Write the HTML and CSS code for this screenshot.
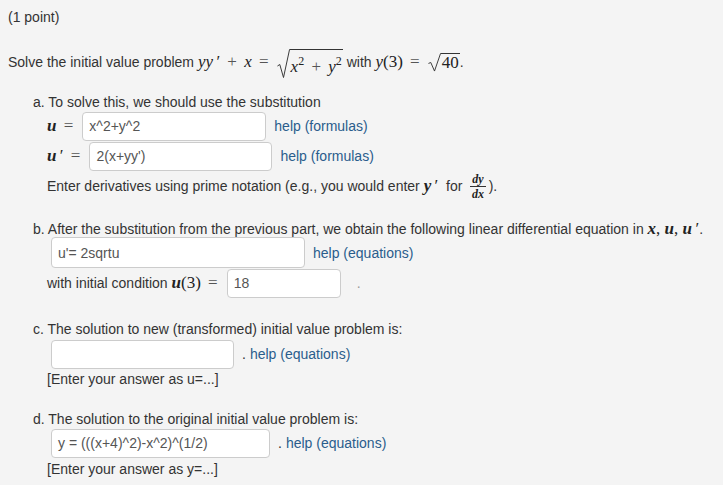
FILE: index.html
```html
<!DOCTYPE html>
<html>
<head>
<meta charset="utf-8">
<link rel="stylesheet" href="styles.css">
</head>
<body>
<div class="page">
  <p class="points">(1 point)</p>
  <p class="problem">Solve the initial value problem&nbsp;<span class="m"><i>yy</i>&thinsp;′ <span class="op">+</span> <i>x</i> <span class="op">=</span></span><span class="sqrt big"><svg class="rad" viewBox="0 0 14 30" preserveAspectRatio="none"><path d="M0.5 17 L3 15.5 L7 28.5 L13.5 0.5 L14 0.5" fill="none" stroke="#333" stroke-width="1"/></svg><span class="radicand m"><i>x</i><sup>2</sup> <span class="op">+</span> <i>y</i><sup>2</sup></span></span>&nbsp;with&nbsp;<span class="m"><i>y</i>(3) <span class="op">=</span></span><span class="sqrt small"><svg class="rad" viewBox="0 0 14 20" preserveAspectRatio="none"><path d="M0.5 11 L3 10 L7 19 L13.5 0.5 L14 0.5" fill="none" stroke="#333" stroke-width="1"/></svg><span class="radicand m">40</span></span>.</p>

  <div class="part part-a">
    <div class="line">a. To solve this, we should use the substitution</div>
    <div class="sub">
      <div class="row"><span class="m b lbl"><i>u</i> <span class="op">=</span></span><span class="field w184">x^2+y^2</span><a class="help">help (formulas)</a></div>
      <div class="row"><span class="m b lbl"><i>u</i>&thinsp;′ <span class="op">=</span></span><span class="field w183">2(x+yy')</span><a class="help">help (formulas)</a></div>
      <div class="row note">Enter derivatives using prime notation (e.g., you would enter&nbsp;<span class="m b"><i>y</i>&thinsp;′</span>&nbsp;&nbsp;for&nbsp;<span class="frac m b"><span class="num"><i>dy</i></span><span class="den"><i>dx</i></span></span>).</div>
    </div>
  </div>

  <div class="part part-b">
    <div class="line">b. After the substitution from the previous part, we obtain the following linear differential equation in <span class="m b"><i>x</i>, <i>u</i>, <i>u</i>&thinsp;′</span>.</div>
    <div class="sub">
      <div class="row tall"><span class="field w254 first">u'= 2sqrtu</span><a class="help">help (equations)</a></div>
      <div class="row">with initial condition&nbsp;<span class="m b lbl"><i>u</i>(3) <span class="op">=</span></span><span class="field w114">18</span><span class="dot">.</span></div>
    </div>
  </div>

  <div class="part part-c">
    <div class="line">c. The solution to new (transformed) initial value problem is:</div>
    <div class="sub">
      <div class="row"><span class="field w183 first"></span><span class="dot2">.</span><a class="help">help (equations)</a></div>
      <div class="line">[Enter your answer as u=...]</div>
    </div>
  </div>

  <div class="part part-d">
    <div class="line">d. The solution to the original initial value problem is:</div>
    <div class="sub">
      <div class="row"><span class="field w219 first">y = (((x+4)^2)-x^2)^(1/2)</span><span class="dot2">.</span><a class="help">help (equations)</a></div>
      <div class="line">[Enter your answer as y=...]</div>
    </div>
  </div>
</div>
</body>
</html>
```

FILE: styles.css
```css
html, body {
  margin: 0;
  padding: 0;
  background: #f4f4f4;
}
body {
  font-family: "Liberation Sans", Arial, sans-serif;
  font-size: 14px;
  color: #333;
  width: 723px;
  height: 485px;
  overflow: hidden;
}
.page {
  padding: 9px 8px 0 8px;
}
p {
  margin: 0;
}
.points {
  line-height: 16px;
}
.problem {
  margin-top: 19px;
  height: 36px;
  display: flex;
  align-items: center;
  white-space: nowrap;
}
.m {
  font-family: "Liberation Serif", "Times New Roman", serif;
  font-size: 17px;
  color: #222;
}
.m i {
  font-style: italic;
}
.m.b i {
  font-weight: bold;
}
.op {
  color: #555;
  margin: 0 3px;
}
.m sup {
  font-size: 12px;
  vertical-align: 7px;
  line-height: 0;
}
.sqrt {
  display: inline-flex;
  align-items: stretch;
  margin-left: 5px;
}
.sqrt .rad {
  width: 13px;
  display: block;
  flex: none;
}
.sqrt.big {
  height: 30px;
  margin-top: 4px;
}
.sqrt.small {
  height: 19px;
  margin-top: 1px;
}
.radicand {
  border-top: 1px solid #333;
  padding: 0 1px;
  display: block;
  white-space: nowrap;
  line-height: 18px;
}
.sqrt.big .radicand {
  padding-top: 8px;
}

.part {
  margin-left: 25px;
}
.line {
  line-height: 16px;
  white-space: nowrap;
}
.part-a { margin-top: 14px; }
.part-b { margin-top: 20px; }
.part-c { margin-top: 23px; }
.part-d { margin-top: 24px; }

.sub {
  margin-left: 14px;
}
.part-a .sub { margin-top: 1px; }
.part-b .sub { margin-top: 0; }
.part-c .sub { margin-top: 2px; }
.part-d .sub { margin-top: 1px; }

.row {
  display: flex;
  align-items: center;
  height: 30px;
  white-space: nowrap;
}
.row.tall {
  height: 31px;
}
.lbl {
  margin-right: 6px;
}
.field {
  box-sizing: border-box;
  height: 29px;
  background: #fff;
  border: 1px solid #ccc;
  border-radius: 4px;
  padding: 0 6px;
  display: flex;
  align-items: center;
  color: #555;
  margin-right: 8px;
  flex: none;
}
.field.first {
  margin-left: 4px;
}
.w184 { width: 184px; }
.w183 { width: 183px; }
.w254 { width: 254px; height: 31px; }
.w114 { width: 114px; }
.w219 { width: 219px; }
.help {
  color: #2a5d8c;
  text-decoration: none;
}
.dot {
  color: #999;
  margin-left: 8px;
}
.dot2 {
  margin-right: 4px;
}
.frac {
  display: inline-flex;
  flex-direction: column;
  align-items: center;
  font-size: 12px;
  line-height: 12px;
  margin: 0 3px 0 4px;
}
.frac .num {
  border-bottom: 1px solid #333;
  padding: 0 2px 1px;
}
.frac .den {
  padding-top: 1px;
}
.part-c .sub .line, .part-d .sub .line {
  margin-top: 2px;
}
.part-d .sub .line {
  margin-top: 3px;
}
```
